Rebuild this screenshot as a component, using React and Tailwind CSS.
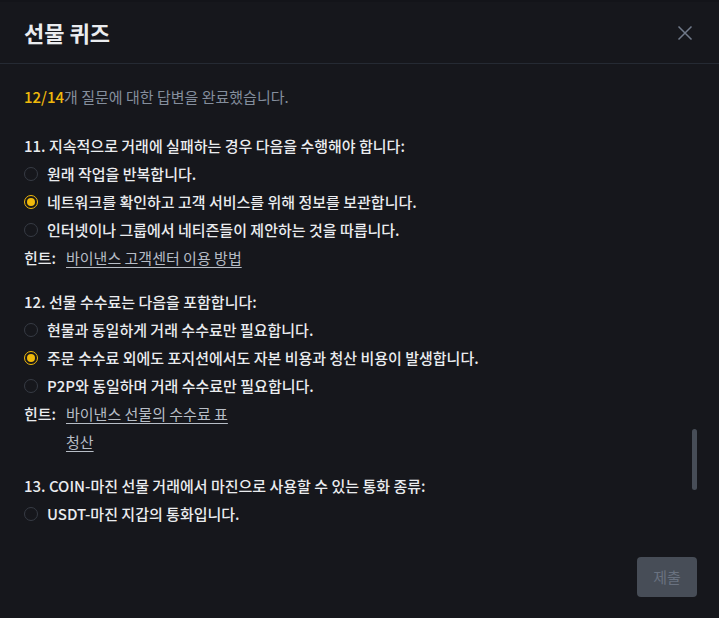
import React from 'react';

const Radio = ({ checked }) =>
  checked ? (
    <span className="flex h-[14px] w-[14px] shrink-0 items-center justify-center rounded-full border-[1.5px] border-[#f0b90b]">
      <span className="h-[8px] w-[8px] rounded-full bg-[#f0b90b]" />
    </span>
  ) : (
    <span className="h-[14px] w-[14px] shrink-0 rounded-full border border-[#363b44]" />
  );

const Question = ({ title, options, selected, hints }) => (
  <div className="flex flex-col">
    <div className="flex h-7 items-center font-medium text-[#eaecef]">{title}</div>
    {options.map((opt, i) => (
      <div key={i} className="flex h-7 items-center gap-[9px] font-medium text-[#eaecef]">
        <Radio checked={selected === i} />
        <span>{opt}</span>
      </div>
    ))}
    {hints && (
      <div className="flex">
        <span className="flex h-7 w-[42px] shrink-0 items-center font-medium text-[#eaecef]">힌트:</span>
        <div className="flex flex-col">
          {hints.map((h) => (
            <a key={h} className="flex h-7 items-center text-[#b7bdc6] underline underline-offset-[3px]">
              {h}
            </a>
          ))}
        </div>
      </div>
    )}
  </div>
);

export default function App() {
  return (
    <div
      className="flex h-[618px] w-[719px] flex-col overflow-hidden bg-[#16171c] text-[15px]"
      style={{ fontFamily: '"Noto Sans CJK KR", "Noto Sans", sans-serif' }}
    >
      <div className="h-[2px] bg-[#131419]" />
      {/* header */}
      <div className="flex h-[62px] items-center justify-between border-b border-[#252a33] pl-6 pr-[26px]">
        <h1 className="text-[22px] font-bold text-[#eaecef]">선물 퀴즈</h1>
        <svg width="16" height="16" viewBox="0 0 16 16" className="text-[#707a8a]">
          <path d="M1.5 1.5 L14.5 14.5 M14.5 1.5 L1.5 14.5" stroke="currentColor" strokeWidth="1.5" />
        </svg>
      </div>

      {/* body */}
      <div className="relative flex-1 overflow-hidden">
        <div className="flex flex-col px-6 pt-[19px]">
          <div className="flex h-7 items-center text-[#848e9c]">
            <span className="font-medium text-[#f0b90b]">12/14</span>개 질문에 대한 답변을 완료했습니다.
          </div>
          <div className="mt-[21px] flex flex-col gap-4">
            <Question
              title="11. 지속적으로 거래에 실패하는 경우 다음을 수행해야 합니다:"
              options={[
                '원래 작업을 반복합니다.',
                '네트워크를 확인하고 고객 서비스를 위해 정보를 보관합니다.',
                '인터넷이나 그룹에서 네티즌들이 제안하는 것을 따릅니다.',
              ]}
              selected={1}
              hints={['바이낸스 고객센터 이용 방법']}
            />
            <Question
              title="12. 선물 수수료는 다음을 포함합니다:"
              options={[
                '현물과 동일하게 거래 수수료만 필요합니다.',
                '주문 수수료 외에도 포지션에서도 자본 비용과 청산 비용이 발생합니다.',
                'P2P와 동일하며 거래 수수료만 필요합니다.',
              ]}
              selected={1}
              hints={['바이낸스 선물의 수수료 표', '청산']}
            />
            <Question
              title="13. COIN-마진 선물 거래에서 마진으로 사용할 수 있는 통화 종류:"
              options={['USDT-마진 지갑의 통화입니다.']}
            />
          </div>
        </div>
        <div className="absolute right-[22px] top-[365px] h-[61px] w-[5px] rounded-full bg-[#474d57]" />
      </div>

      {/* footer */}
      <div className="flex justify-end pb-[21px] pr-[22px] pt-5">
        <button className="h-10 w-[60px] rounded-[4px] bg-[#474d57] text-[#6a7280]">제출</button>
      </div>
    </div>
  );
}
